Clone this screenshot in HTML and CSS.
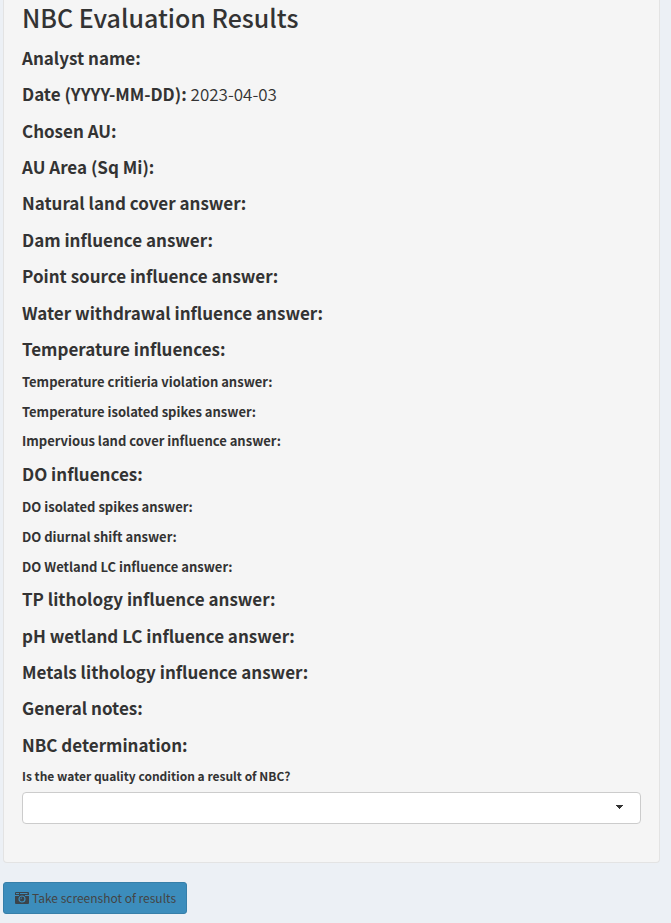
FILE: index.html
```html
<!DOCTYPE html>
<html lang="en">
<head>
<meta charset="utf-8">
<title>NBC Evaluation Results</title>
<link rel="stylesheet" href="styles.css">
</head>
<body>
<main>
<section class="panel">
<h2>NBC Evaluation Results</h2>
<h4>Analyst name:</h4>
<h4>Date (YYYY-MM-DD): <span class="value">2023-04-03</span></h4>
<h4>Chosen AU:</h4>
<h4>AU Area (Sq Mi):</h4>
<h4>Natural land cover answer:</h4>
<h4>Dam influence answer:</h4>
<h4>Point source influence answer:</h4>
<h4>Water withdrawal influence answer:</h4>
<h4>Temperature influences:</h4>
<h5>Temperature critieria violation answer:</h5>
<h5>Temperature isolated spikes answer:</h5>
<h5>Impervious land cover influence answer:</h5>
<h4>DO influences:</h4>
<h5>DO isolated spikes answer:</h5>
<h5>DO diurnal shift answer:</h5>
<h5>DO Wetland LC influence answer:</h5>
<h4>TP lithology influence answer:</h4>
<h4>pH wetland LC influence answer:</h4>
<h4>Metals lithology influence answer:</h4>
<h4>General notes:</h4>
<h4>NBC determination:</h4>
<label for="nbc">Is the water quality condition a result of NBC?</label>
<select id="nbc"><option></option><option>Yes</option><option>No</option></select>
</section>
<button type="button" class="shot">
<svg class="camera" viewBox="0 0 14 12" aria-hidden="true">
<path fill="#3b444b" d="M1 0h12q1 0 1 1v10q0 1-1 1H1q-1 0-1-1V1q0-1 1-1z"/>
<path fill="#3c8dbc" d="M1 1h3v1H1zM5 1h8l-1 1H5zM0 3h4v1H0zM10 3h4v1h-4z"/>
<circle cx="7" cy="7" r="3" fill="none" stroke="#3c8dbc" stroke-width="1.2"/>
<path d="M5.8 7.2Q5.8 6 7 5.8" fill="none" stroke="#3c8dbc" stroke-width=".8"/>
</svg>
<span>Take screenshot of results</span>
</button>
</main>
</body>
</html>
```
FILE: styles.css
```css
* { box-sizing: border-box; }
body {
  margin: 0;
  background: #ecf0f5;
  color: #333;
  font-family: "Source Sans Pro", "Noto Sans CJK SC", "Open Sans", sans-serif;
}
main { padding: 0 11px 0 3px; }
.panel {
  margin-bottom: 19px;
  padding: 2px 18px 38px;
  background: #f5f5f5;
  border: 1px solid #e3e3e3;
  border-top: 0;
  border-radius: 0 0 4px 4px;
}
h2, h4, h5 { margin: 0; }
h2 {
  margin-bottom: 8px;
  font-size: 25px;
  line-height: 30px;
  font-weight: 500;
}
h4 {
  padding: 9px 0;
  font-size: 17px;
  line-height: 1.08;
  font-weight: 700;
}
h5 {
  padding: 7px 0;
  font-size: 13px;
  line-height: 1.2;
  font-weight: 700;
}
.value { font-weight: 350; }
label {
  display: block;
  margin: 4px 0 7px;
  font-size: 12px;
  line-height: 18px;
  font-weight: 700;
}
select {
  display: block;
  appearance: none;
  width: 100%;
  height: 32px;
  padding: 0 30px 0 12px;
  border: 1px solid #ccc;
  border-radius: 4px;
  font: inherit;
  font-size: 12px;
  background:
    linear-gradient(to bottom left, #333 50%, transparent 50%) right 20px top 12px / 4px 4px no-repeat,
    linear-gradient(to bottom right, #333 50%, transparent 50%) right 16px top 12px / 4px 4px no-repeat,
    #fff;
}
.shot {
  display: flex;
  align-items: center;
  gap: 3px;
  height: 32px;
  padding: 0 10px 0 11px;
  color: #444;
  background: #3c8dbc;
  border: 1px solid #367fa9;
  border-radius: 3px;
  font: inherit;
  font-size: 12px;
}
.camera { width: 14px; height: 12px; }
```
